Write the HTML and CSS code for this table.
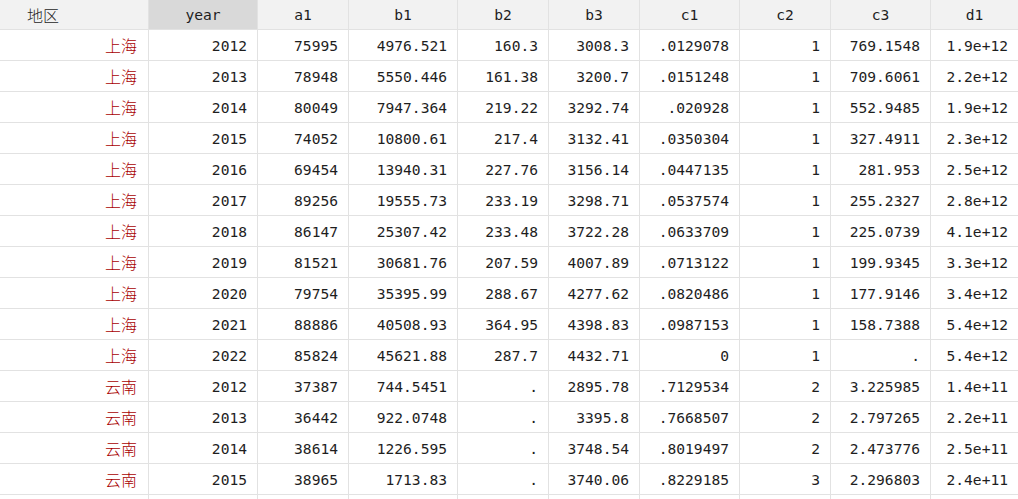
FILE: index.html
```html
<!DOCTYPE html>
<html lang="zh">
<head>
<meta charset="utf-8">
<title>Data Browser</title>
<link rel="stylesheet" href="styles.css">
</head>
<body>
<div class="grid">
  <div class="hd hd-first">地区</div>
  <div class="hd hd-sel">year</div>
  <div class="hd">a1</div>
  <div class="hd">b1</div>
  <div class="hd">b2</div>
  <div class="hd">b3</div>
  <div class="hd">c1</div>
  <div class="hd">c2</div>
  <div class="hd">c3</div>
  <div class="hd">d1</div>

  <div class="c region">上海</div><div class="c">2012</div><div class="c">75995</div><div class="c">4976.521</div><div class="c">160.3</div><div class="c">3008.3</div><div class="c">.0129078</div><div class="c">1</div><div class="c">769.1548</div><div class="c">1.9e+12</div>
  <div class="c region">上海</div><div class="c">2013</div><div class="c">78948</div><div class="c">5550.446</div><div class="c">161.38</div><div class="c">3200.7</div><div class="c">.0151248</div><div class="c">1</div><div class="c">709.6061</div><div class="c">2.2e+12</div>
  <div class="c region">上海</div><div class="c">2014</div><div class="c">80049</div><div class="c">7947.364</div><div class="c">219.22</div><div class="c">3292.74</div><div class="c">.020928</div><div class="c">1</div><div class="c">552.9485</div><div class="c">1.9e+12</div>
  <div class="c region">上海</div><div class="c">2015</div><div class="c">74052</div><div class="c">10800.61</div><div class="c">217.4</div><div class="c">3132.41</div><div class="c">.0350304</div><div class="c">1</div><div class="c">327.4911</div><div class="c">2.3e+12</div>
  <div class="c region">上海</div><div class="c">2016</div><div class="c">69454</div><div class="c">13940.31</div><div class="c">227.76</div><div class="c">3156.14</div><div class="c">.0447135</div><div class="c">1</div><div class="c">281.953</div><div class="c">2.5e+12</div>
  <div class="c region">上海</div><div class="c">2017</div><div class="c">89256</div><div class="c">19555.73</div><div class="c">233.19</div><div class="c">3298.71</div><div class="c">.0537574</div><div class="c">1</div><div class="c">255.2327</div><div class="c">2.8e+12</div>
  <div class="c region">上海</div><div class="c">2018</div><div class="c">86147</div><div class="c">25307.42</div><div class="c">233.48</div><div class="c">3722.28</div><div class="c">.0633709</div><div class="c">1</div><div class="c">225.0739</div><div class="c">4.1e+12</div>
  <div class="c region">上海</div><div class="c">2019</div><div class="c">81521</div><div class="c">30681.76</div><div class="c">207.59</div><div class="c">4007.89</div><div class="c">.0713122</div><div class="c">1</div><div class="c">199.9345</div><div class="c">3.3e+12</div>
  <div class="c region">上海</div><div class="c">2020</div><div class="c">79754</div><div class="c">35395.99</div><div class="c">288.67</div><div class="c">4277.62</div><div class="c">.0820486</div><div class="c">1</div><div class="c">177.9146</div><div class="c">3.4e+12</div>
  <div class="c region">上海</div><div class="c">2021</div><div class="c">88886</div><div class="c">40508.93</div><div class="c">364.95</div><div class="c">4398.83</div><div class="c">.0987153</div><div class="c">1</div><div class="c">158.7388</div><div class="c">5.4e+12</div>
  <div class="c region">上海</div><div class="c">2022</div><div class="c">85824</div><div class="c">45621.88</div><div class="c">287.7</div><div class="c">4432.71</div><div class="c">0</div><div class="c">1</div><div class="c">.</div><div class="c">5.4e+12</div>
  <div class="c region">云南</div><div class="c">2012</div><div class="c">37387</div><div class="c">744.5451</div><div class="c">.</div><div class="c">2895.78</div><div class="c">.7129534</div><div class="c">2</div><div class="c">3.225985</div><div class="c">1.4e+11</div>
  <div class="c region">云南</div><div class="c">2013</div><div class="c">36442</div><div class="c">922.0748</div><div class="c">.</div><div class="c">3395.8</div><div class="c">.7668507</div><div class="c">2</div><div class="c">2.797265</div><div class="c">2.2e+11</div>
  <div class="c region">云南</div><div class="c">2014</div><div class="c">38614</div><div class="c">1226.595</div><div class="c">.</div><div class="c">3748.54</div><div class="c">.8019497</div><div class="c">2</div><div class="c">2.473776</div><div class="c">2.5e+11</div>
  <div class="c region">云南</div><div class="c">2015</div><div class="c">38965</div><div class="c">1713.83</div><div class="c">.</div><div class="c">3740.06</div><div class="c">.8229185</div><div class="c">3</div><div class="c">2.296803</div><div class="c">2.4e+11</div>
  <div class="c"></div><div class="c"></div><div class="c"></div><div class="c"></div><div class="c"></div><div class="c"></div><div class="c"></div><div class="c"></div><div class="c"></div><div class="c"></div>
</div>
</body>
</html>
```
FILE: styles.css
```css
html, body {
  margin: 0;
  padding: 0;
  background: #ffffff;
  overflow: hidden;
}

.grid {
  display: grid;
  grid-template-columns: 148px 108px 90px 108px 90px 90px 99px 90px 99px 87px;
  grid-template-rows: 29px;
  grid-auto-rows: 30px;
  gap: 1px;
  background: #e2e2e2;
  width: 1018px;
  height: 499px;
  overflow: hidden;
  font-family: "DejaVu Sans Mono", "Liberation Mono", "Noto Sans CJK SC", monospace;
  font-size: 14.6px;
  color: #1e1e1e;
}

.hd {
  background: #f2f2f2;
  display: flex;
  align-items: center;
  justify-content: center;
}

.hd-first {
  justify-content: flex-start;
  padding-left: 27px;
  font-family: "Noto Sans CJK SC", sans-serif;
  font-size: 16px;
  font-weight: 300;
}

.hd-sel {
  background: #d9d9d9;
}

.c {
  background: #ffffff;
  display: flex;
  align-items: center;
  justify-content: flex-end;
  padding-right: 10px;
  white-space: nowrap;
  overflow: hidden;
}

.region {
  color: #a80000;
  font-family: "Noto Sans CJK SC", sans-serif;
  font-size: 16px;
  font-weight: 300;
  padding-right: 11px;
}
```
